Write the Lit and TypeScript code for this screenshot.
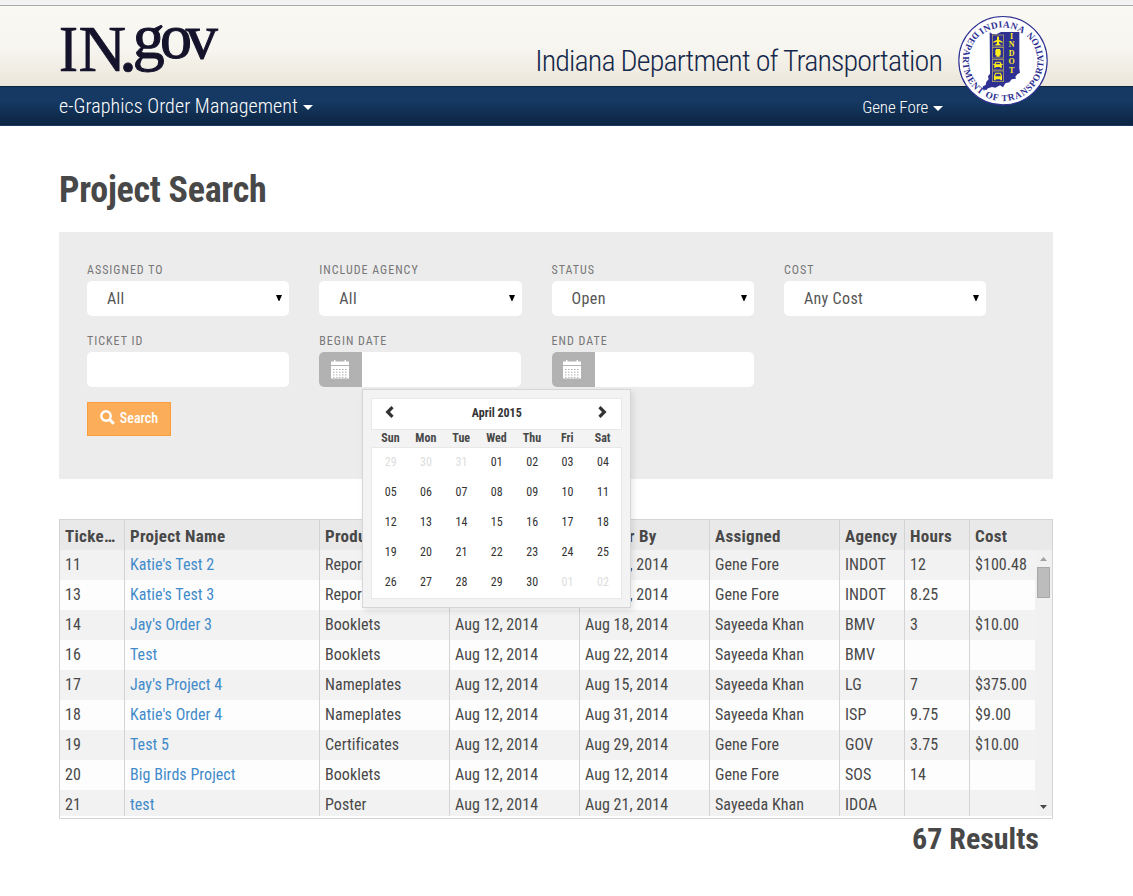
import { LitElement, html, css, svg } from "lit";
import { customElement, property } from "lit/decorators.js";

@customElement("indot-seal")
export class IndotSeal extends LitElement {
  static styles = css`
    :host { display: block; }
    svg { display: block; width: 92px; height: 92px; }
    .ring { font: bold 28px "Liberation Serif", serif; fill: #2e3192; }
    .col { font: bold 24px "Liberation Serif", serif; fill: #ffee1a; text-anchor: middle; }
  `;
  render() {
    return html`<svg viewBox="411 45 276 276">
      <circle cx="549" cy="182" r="132.500" fill="#fff" stroke="#2e3192" stroke-width="3.500" />
      <defs>
        <path id="top" d="M486 104.500A100 100 0 0 1 612 104.500" />
        <path id="bottom" d="M466 94.500A121 121 0 1 0 632.500 94.500" />
      </defs>
      <text class="ring"><textPath href="#top" textLength="131">INDIANA</textPath></text>
      <text class="ring"><textPath href="#bottom" textLength="576">DEPARTMENT OF TRANSPORTATION</textPath></text>
      <path fill="#2e3192" d="M509 97l8 5 12 1 14-7h55v110l2 12-8 5-6 7 2 6-13 2-7 9-12 3-7 12-9-6-14 7-10-2-12 4-5 5-12-2 2-9 8-4 2-10 7-7-2-9 6-8z" />
      <g fill="none" stroke="#c9b95a" stroke-width="2">
        <rect x="517" y="105" width="34" height="33" /><rect x="517" y="142" width="34" height="32" />
        <rect x="517" y="178" width="34" height="32" /><rect x="517" y="213" width="34" height="32" />
      </g>
      <g fill="#ffee1a">
        <path d="M534 108l3 4v7l11 6v3l-11-3v5l5 4v2h-16v-2l5-4v-5l-11 3v-3l11-6v-7z" />
        <path d="M528 147h12v3h2v16h-3v4h-10v-4h-3v-16h2z" />
        <path fill-rule="evenodd" d="M527 185h14l4 7h3v3h-3v9h-4v-3h-14v3h-4v-9h-3v-3h3zm2 3l-2 5h14l-2-5z" />
        <path fill-rule="evenodd" d="M526 218h16l4 9v14h-5v-3h-14v3h-5v-14zm2 3l-3 8h18l-3-8z" />
      </g>
      ${"INDOT".split("").map((c, i) => svg`<text class="col" x="575" y=${116 + i * 25.5}>${c}</text>`)}
    </svg>`;
  }
}

@customElement("date-picker")
export class DatePicker extends LitElement {
  static styles = css`
    :host { display: block; box-sizing: border-box; width: 269px; height: 219px; padding: 8px; border: 1px solid #d6d6d6;
      background: #f3f3f3; box-shadow: 2px 3px 6px rgba(0,0,0,.1); color: #333; font-size: 12px; }
    .head { box-sizing: border-box; height: 32px; display: flex; align-items: center; justify-content: space-between;
      padding: 0 14px 0 13px; background: #fff; border: 1px solid #e8e8e8; font-weight: 700; line-height: 28px; }
    .head span { position: relative; top: -1px; left: .5px; }
    svg { width: 9px; height: 12px; display: block; fill: none; stroke: #333; stroke-width: 3.2; position: relative; top: -2px; }
    .week, .days { display: grid; grid-template-columns: repeat(7, 1fr); text-align: center; }
    .week { padding: 0 2px 0 1.5px; line-height: 17px; font-weight: 700; color: #484848; }
    .days { box-sizing: border-box; height: 152px; padding: 0 .7px; line-height: 30px; grid-auto-rows: 30px;
      background: #fff; border: 1px solid #e8e8e8; }
    .days span { position: relative; top: -1px; }
    .days .off { color: #ddd; }
  `;
  render() {
    const days = [29, 30, 31, ...Array.from({ length: 30 }, (_, i) => i + 1), 1, 2];
    return html`
      <div class="head">
        <svg viewBox="0 0 9 12"><path d="M7.500 1.200L2.700 6l4.800 4.800" /></svg>
        <span>April 2015</span>
        <svg viewBox="0 0 9 12"><path d="M1.500 1.200L6.300 6l-4.800 4.800" /></svg>
      </div>
      <div class="week">${["Sun", "Mon", "Tue", "Wed", "Thu", "Fri", "Sat"].map((d) => html`<span>${d}</span>`)}</div>
      <div class="days">
        ${days.map((d, i) => html`<span class=${i < 3 || i > 32 ? "off" : ""}>${String(d).padStart(2, "0")}</span>`)}
      </div>`;
  }
}

@customElement("search-field")
export class SearchField extends LitElement {
  @property() label = "";
  @property() kind = "text";
  @property() value = "";
  static styles = css`
    :host { display: block; }
    label { display: block; height: 20px; line-height: 18px; font-size: 12px; letter-spacing: 1px; color: #777;
      text-transform: uppercase; white-space: nowrap; }
    .box { box-sizing: border-box; height: 35px; border-radius: 5px; background: #fff; display: flex; align-items: center;
      overflow: hidden; font-size: 16px; letter-spacing: .35px; color: #555; }
    .select { padding: 0 7px 0 20px; justify-content: space-between; }
    .date { width: 202px; }
    .arrow { width: 6px; height: 6px; margin-top: -2px; }
    .addon { width: 43px; height: 35px; background: #b2b2b2; display: flex; justify-content: center; align-items: center; }
    .addon svg { width: 18px; height: 19px; margin: 0 2px 1px 0; }
    svg { display: block; }
  `;
  render() {
    const dots = [];
    for (let r = 0; r < 4; r++)
      for (let c = 0; c < 5; c++) dots.push(svg`<rect x=${2 + c * 3} y=${9 + r * 2.7} width="1.500" height="1" fill="#b2b2b2" />`);
    return html`<label>${this.label}</label>
      ${this.kind === "select"
        ? html`<div class="box select"><span>${this.value}</span><svg class="arrow" viewBox="0 0 6 6"><path d="M0 0h6L3.400 6h-.8z" /></svg></div>`
        : this.kind === "date"
        ? html`<div class="box date"><span class="addon"><svg viewBox="0 0 18 19">
            <path fill="#fff" d="M0 1.500h3V0h1.500v1.500h9V0H15v1.500h3V5H0zM0 6h18v12.500H0z" />${dots}</svg></span></div>`
        : html`<div class="box"></div>`}`;
  }
}

type Row = [string, string, string, string, string, string, string, string, string];
const ROWS: Row[] = [
  ["11", "Katie's Test 2", "Reports", "Aug 12, 2014", "Aug 22, 2014", "Gene Fore", "INDOT", "12", "$100.48"],
  ["13", "Katie's Test 3", "Reports", "Aug 12, 2014", "Aug 22, 2014", "Gene Fore", "INDOT", "8.25", ""],
  ["14", "Jay's Order 3", "Booklets", "Aug 12, 2014", "Aug 18, 2014", "Sayeeda Khan", "BMV", "3", "$10.00"],
  ["16", "Test", "Booklets", "Aug 12, 2014", "Aug 22, 2014", "Sayeeda Khan", "BMV", "", ""],
  ["17", "Jay's Project 4", "Nameplates", "Aug 12, 2014", "Aug 15, 2014", "Sayeeda Khan", "LG", "7", "$375.00"],
  ["18", "Katie's Order 4", "Nameplates", "Aug 12, 2014", "Aug 31, 2014", "Sayeeda Khan", "ISP", "9.75", "$9.00"],
  ["19", "Test 5", "Certificates", "Aug 12, 2014", "Aug 29, 2014", "Gene Fore", "GOV", "3.75", "$10.00"],
  ["20", "Big Birds Project", "Booklets", "Aug 12, 2014", "Aug 12, 2014", "Gene Fore", "SOS", "14", ""],
  ["21", "test", "Poster", "Aug 12, 2014", "Aug 21, 2014", "Sayeeda Khan", "IDOA", "", ""],
];
const HEADS = ["Ticket ID", "Project Name", "Product", "Ordered", "Deliver By", "Assigned", "Agency", "Hours", "Cost"];

@customElement("order-grid")
export class OrderGrid extends LitElement {
  static styles = css`
    :host { display: block; box-sizing: border-box; height: 300px; border: 1px solid #d4d4d4; font-size: 16px; color: #484848; background: #fff; }
    .row { display: grid; grid-template-columns: 65px 195px 130px 130px 130px 130px 65px 65px 1fr; height: 30px; letter-spacing: .04px; }
    .cell { box-sizing: border-box; padding-left: 5px; border-right: 1px solid #d4d4d4; line-height: 29px; white-space: nowrap;
      overflow: hidden; text-overflow: ellipsis; }
    .cell:last-child { border-right: 0; }
    .head { background: #e9e9e9; font-weight: 700; font-size: 17px; letter-spacing: .3px; }
    .head .cell { line-height: 32px; padding-right: 7px; }
    .head .tight { padding-right: 0; }
    .view { display: flex; height: 266px; overflow: hidden; }
    .rows { flex: 1; }
    .rows .row { background: #fdfdfd; }
    .rows .row:nth-child(odd) { background: #f2f2f2; }
    .link { color: #428bca; }
    .bar { width: 17px; height: 266px; background: #f1f1f1; display: flex; flex-direction: column; align-items: center; }
    .up { width: 7px; height: 4px; margin: 7px 0 6px; fill: #a0a0a0; }
    .thumb { box-sizing: border-box; width: 13px; height: 31px; background: #bcbcbc; border: 1px solid #a8a8a8; }
    .down { width: 7px; height: 4px; margin: auto 0 7px; fill: #484848; }
  `;
  render() {
    return html`<div class="row head">${HEADS.map((h) => html`<div class="cell ${h === "Agency" ? "tight" : ""}">${h}</div>`)}</div>
      <div class="view">
        <div class="rows">
          ${ROWS.map((r) => html`<div class="row">${r.map((c, i) => html`<div class="cell ${i === 1 ? "link" : ""}">${c}</div>`)}</div>`)}
        </div>
        <div class="bar">
          <svg class="up" viewBox="0 0 7 4"><path d="M0 4L3.500 0 7 4z" /></svg>
          <div class="thumb"></div>
          <svg class="down" viewBox="0 0 7 4"><path d="M0 0h7L3.500 4z" /></svg>
        </div>
      </div>`;
  }
}

@customElement("app-root")
export class AppRoot extends LitElement {
  static styles = css`
    :host { display: block; height: 896px; overflow: hidden; background: #fff; color: #484848;
      font-family: "Roboto Condensed", Roboto, sans-serif; font-stretch: 75%; }
    .strip { height: 5px; background: #f2f2f2; border-bottom: 1px solid #a9a9a9; }
    header { height: 80px; display: flex; justify-content: space-between; padding: 0 84px 0 59px;
      background: linear-gradient(#f9f8f3 0, #f8f6f1 50%, #ebe6da 100%); }
    .logo { width: 162px; height: 76px; display: block; overflow: visible; }
    .logo text { font: 66px "Liberation Serif", serif; fill: #15132b; stroke: #15132b; stroke-width: .7px; }
    .logo .dot { font-size: 76px; }
    .logo .gov { font-size: 64px; stroke-width: 1px; }
    .dept { display: flex; }
    .dept h2 { margin: 0 15px 0 0; font-size: 30px; font-weight: 300; letter-spacing: -.87px; line-height: 36px; padding-top: 37px; color: #14284b; white-space: nowrap; }
    .seal { margin-top: 9px; position: relative; z-index: 2; height: 71px; }
    nav { box-sizing: border-box; height: 40px; border-top: 1px solid #0d2340; border-bottom: 1px solid #1a3a63; display: flex; align-items: center;
      justify-content: space-between; padding: 0 190px 0 59px; color: #fff;
      background: linear-gradient(#153962 0, #153962 38%, #0c2441 100%); }
    .brand { font-size: 20px; font-weight: 350; letter-spacing: .08px; }
    .user { font-size: 17px; font-weight: 350; letter-spacing: -.1px; padding-top: 2px; }
    .caret { display: inline-block; width: 0; height: 0; border: 5px solid transparent; border-top-color: #fff; border-bottom: 0; vertical-align: middle; margin-left: 1px; }
    h1 { margin: 40px 0 0 59px; height: 66px; line-height: 48px; font-size: 36px; font-weight: 700; letter-spacing: -.26px; }
    main { width: 994px; margin-left: 59px; }
    .panel { box-sizing: border-box; height: 247px; padding: 29px 67px 0 28px; background: #ececec; }
    .fields { display: grid; grid-template-columns: repeat(4, 202.3px); column-gap: 30px; row-gap: 16px; }
    .anchor { position: relative; }
    date-picker { position: absolute; left: 43px; top: 57px; z-index: 5; }
    button { box-sizing: border-box; width: 84px; height: 34px; margin-top: 15px; padding: 0 0 2px 0; border: 1px solid #fa9d3c; background: #fbad5a; color: #fff;
      display: flex; align-items: center; justify-content: center; gap: 5px; font: inherit; font-size: 14px; font-weight: 500; font-stretch: inherit; }
    button svg { width: 15px; height: 15px; fill: none; stroke: #fff; margin-top: -2px; }
    order-grid { margin-top: 40px; }
    .results { margin: 2px 14px 0 0; text-align: right; font-size: 30px; font-weight: 700; line-height: 36px; }
  `;
  render() {
    return html`
      <div class="strip"></div>
      <header>
        <svg class="logo" viewBox="0 0 162 76">
          <text x="0" y="65" textLength="19" lengthAdjust="spacingAndGlyphs">I</text>
          <text x="19.500" y="65">N</text>
          <text class="dot" x="59.400" y="65">.</text>
          <text class="gov" x="73.800 101 126.800" y="52">gov</text>
        </svg>
        <div class="dept">
          <h2>Indiana Department of Transportation</h2>
          <div class="seal"><indot-seal></indot-seal></div>
        </div>
      </header>
      <nav>
        <span class="brand">e-Graphics Order Management <i class="caret"></i></span>
        <span class="user">Gene Fore <i class="caret"></i></span>
      </nav>
      <h1>Project Search</h1>
      <main>
        <section class="panel">
          <div class="fields">
            <search-field label="Assigned To" kind="select" value="All"></search-field>
            <search-field label="Include Agency" kind="select" value="All"></search-field>
            <search-field label="Status" kind="select" value="Open"></search-field>
            <search-field label="Cost" kind="select" value="Any Cost"></search-field>
            <search-field label="Ticket ID"></search-field>
            <div class="anchor">
              <search-field label="Begin Date" kind="date"></search-field>
              <date-picker></date-picker>
            </div>
            <search-field label="End Date" kind="date"></search-field>
          </div>
          <button>
            <svg viewBox="0 0 15 15"><circle cx="6" cy="6" r="4.700" stroke-width="2.400" /><path d="M9.500 9.500l4.300 4.300" stroke-width="3" /></svg>
            Search
          </button>
        </section>
        <order-grid></order-grid>
        <div class="results">67 Results</div>
      </main>`;
  }
}
